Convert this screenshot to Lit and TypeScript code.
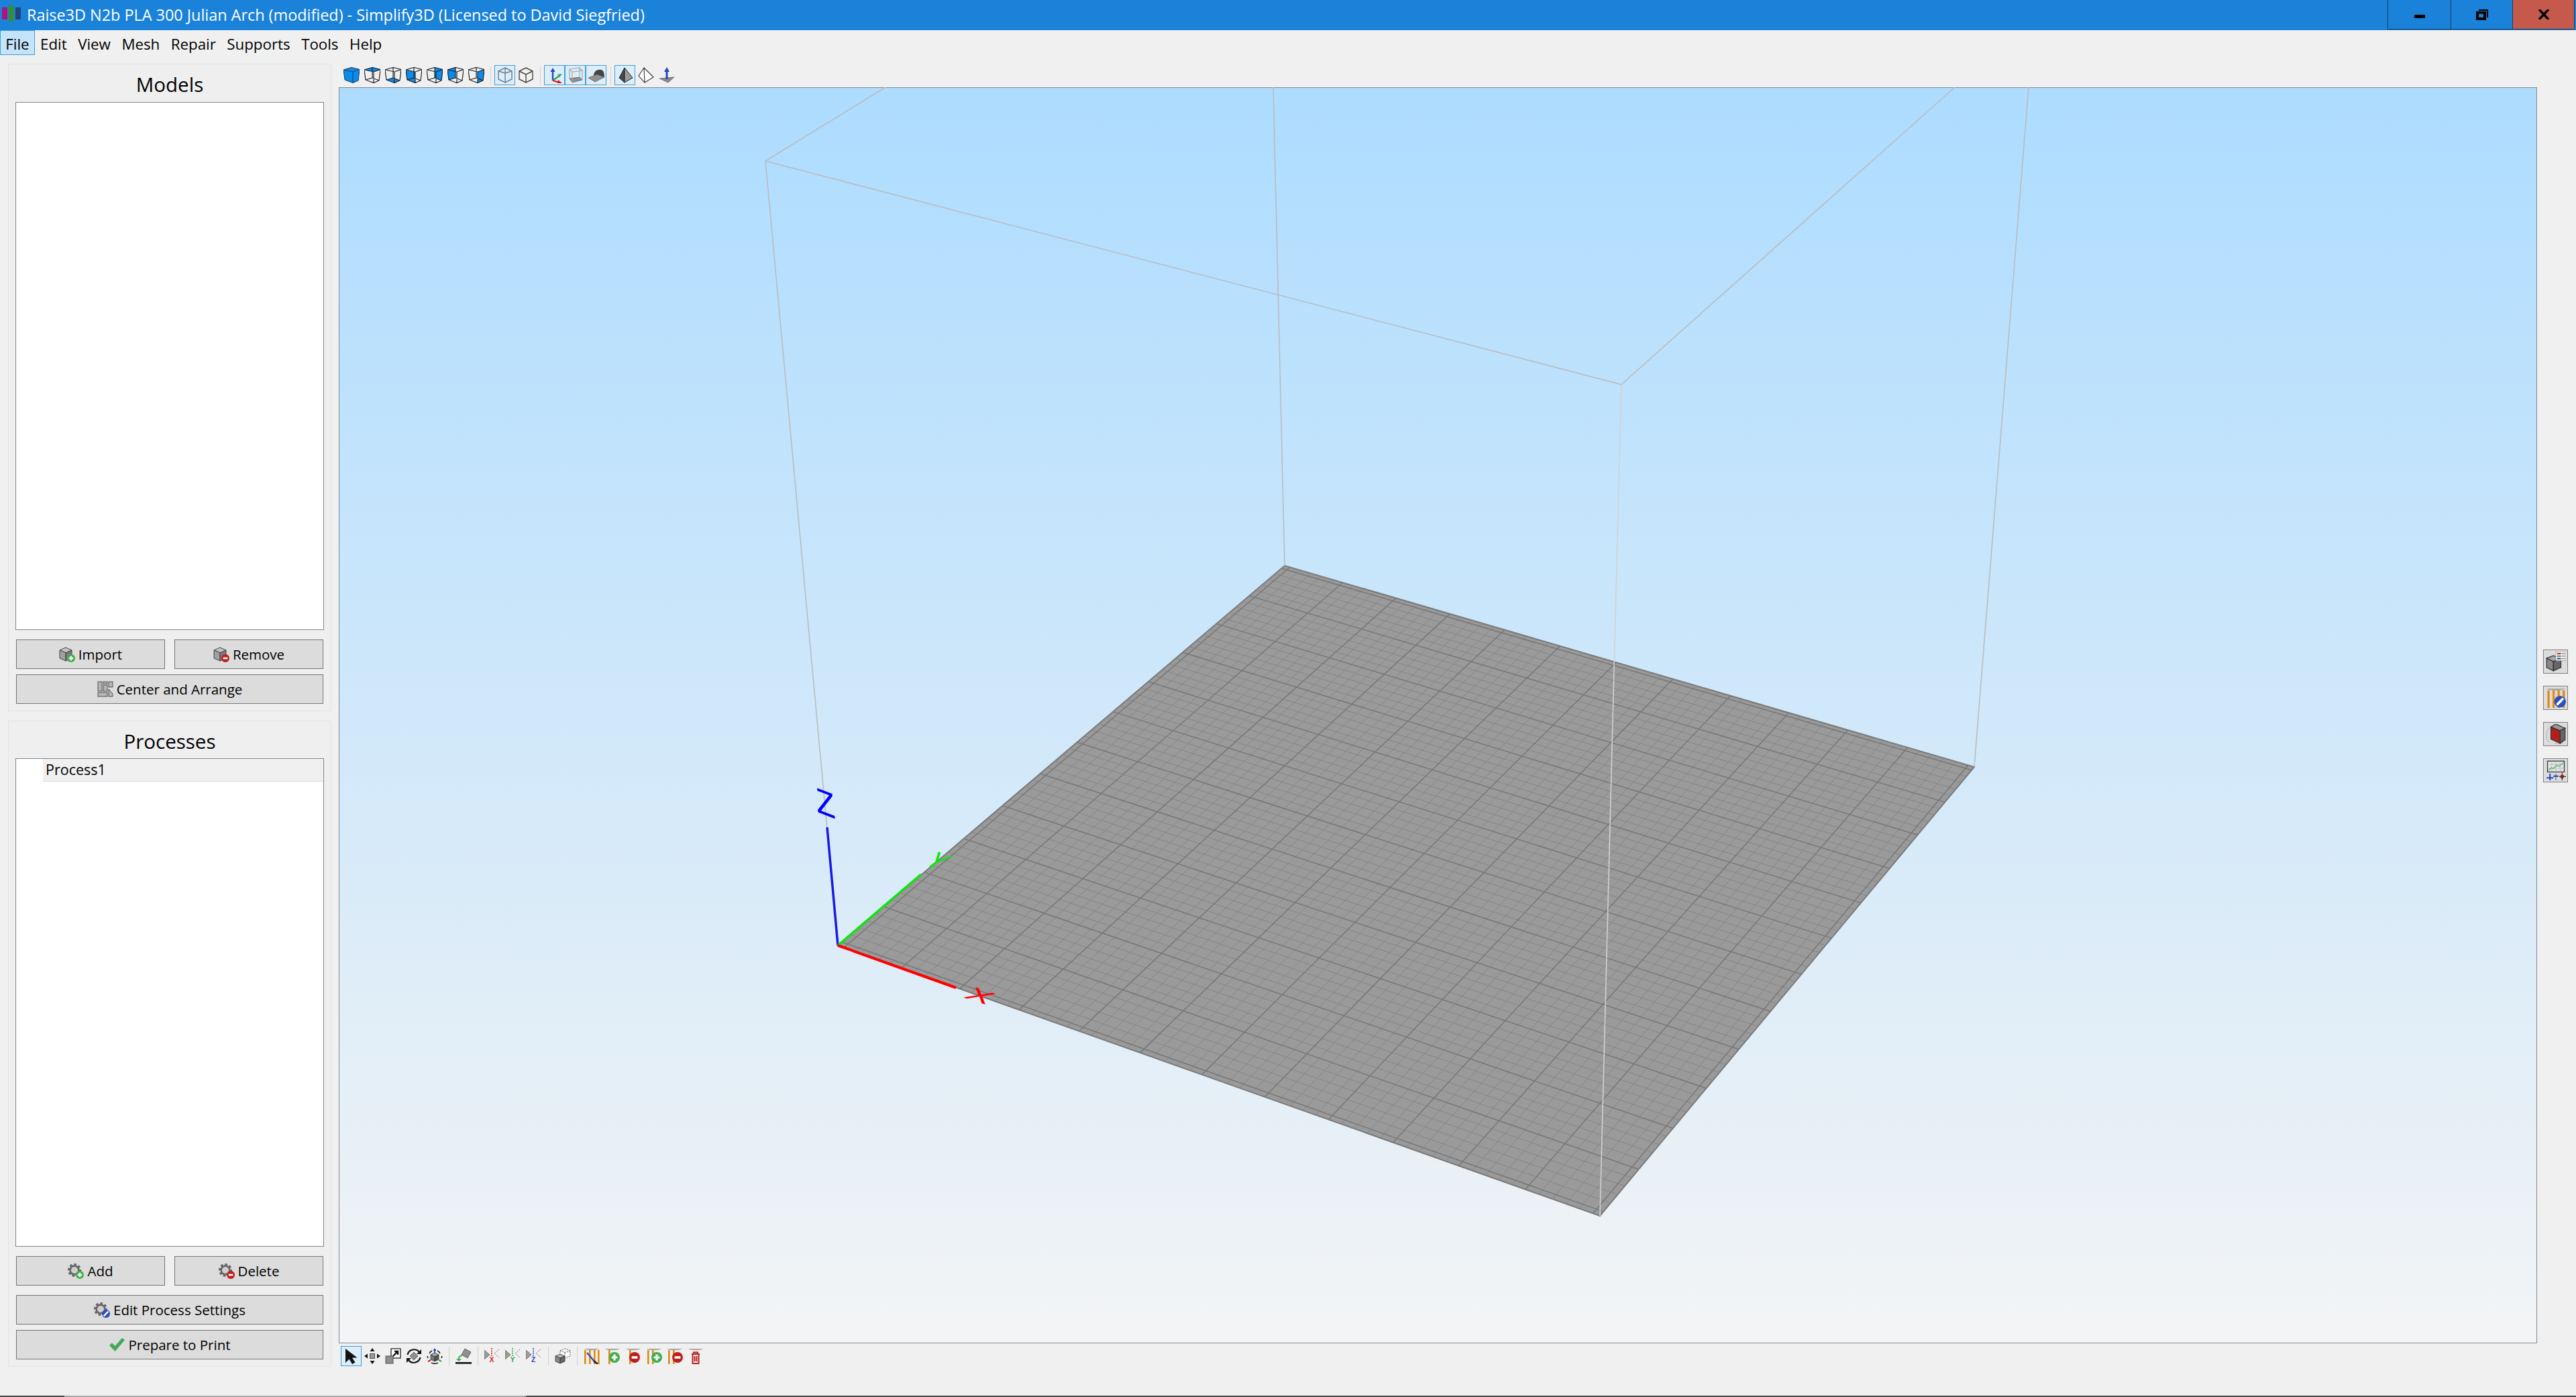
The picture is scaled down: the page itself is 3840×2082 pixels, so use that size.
import { LitElement, html, svg, css } from "lit";
import { customElement } from "lit/decorators.js";

// ---- build plate: 305mm bed projected on to the four corners seen on screen
const P = [[1249.3, 1409.3], [2385, 1812], [2943, 1143], [1915, 843]];

function makeHomography() {
  const [[x0, y0], [x1, y1], [x2, y2], [x3, y3]] = P;
  const dx1 = x1 - x2, dx2 = x3 - x2, sx = x0 - x1 + x2 - x3;
  const dy1 = y1 - y2, dy2 = y3 - y2, sy = y0 - y1 + y2 - y3;
  const den = dx1 * dy2 - dx2 * dy1;
  const g = (sx * dy2 - dx2 * sy) / den;
  const h = (dx1 * sy - sx * dy1) / den;
  const a = x1 - x0 + g * x1, b = x3 - x0 + h * x3;
  const d = y1 - y0 + g * y1, e = y3 - y0 + h * y3;
  return (u: number, v: number) => {
    const w = g * u + h * v + 1;
    return [(a * u + b * v + x0) / w, (d * u + e * v + y0) / w];
  };
}

const project = makeHomography();

function gridPath(step: number, skipMajor: boolean) {
  let d = "";
  for (let mm = 2.5; mm < 305; mm += step) {
    if (skipMajor && Math.abs((mm - 2.5) % 25) < 0.01) continue;
    const t = mm / 305;
    const [ax, ay] = project(t, 0), [bx, by] = project(t, 1);
    const [cx, cy] = project(0, t), [ex, ey] = project(1, t);
    d += `M${ax.toFixed(1)} ${ay.toFixed(1)}L${bx.toFixed(1)} ${by.toFixed(1)}`;
    d += `M${cx.toFixed(1)} ${cy.toFixed(1)}L${ex.toFixed(1)} ${ey.toFixed(1)}`;
  }
  return d;
}

const minorGrid = gridPath(5, true);
const majorGrid = gridPath(25, false);

const scene = svg`
  <polygon points=${P.map((p) => p.join(",")).join(" ")} fill="#9a9a9a" stroke="#7a7a7a" stroke-width="2"/>
  <path d=${minorGrid} stroke="#868686" stroke-width="1" fill="none"/>
  <path d=${majorGrid} stroke="#777" stroke-width="1.5" fill="none"/>
  <g stroke="#b8bdc0" stroke-width="1.6" fill="none">
    <path d="M1320 130L1141 240L2417 573L2914 130"/>
    <path d="M1141 240L1249 1409"/>
    <path d="M1898 130L1915 843"/>
    <path d="M3024 130L2943 1143"/>
    <path d="M2417 573L2385 1812" stroke="#cfd2d3"/>
  </g>
  <path d="M1233 1233L1249 1409" stroke="#1a1ae6" stroke-width="3.5"/>
  <path d="M1249 1409L1373 1303M1386 1293L1392 1288" stroke="#0ee60e" stroke-width="3.5"/>
  <path d="M1249 1409L1425 1472" stroke="#f00" stroke-width="4"/>
  <text class="axis" fill="#00f" transform="matrix(.92 .35 .087 1.07 1218 1210)" font-size="50">Z</text>
  <text class="axis" fill="#0ee60e" transform="matrix(.8625 .3 -.85 .725 1374.5 1289)" font-size="40">Y</text>
  <text class="axis" fill="#f00" transform="matrix(1.31 .43 -.616 .56 1435 1486)" font-size="40">X</text>
`;

// ---- toolbar icons, all on a 24 box
const V = {
  A: "0,4", B: "12,0.5", C: "24,3.5", D: "14,7",
  E: "2,19", F: "12,16", G: "22,20", H: "14,23.5",
};
const faces: Record<string, string> = {
  top: `${V.A} ${V.B} ${V.C} ${V.D}`,
  bottom: `${V.E} ${V.F} ${V.G} ${V.H}`,
  frontL: `${V.A} ${V.D} ${V.H} ${V.E}`,
  frontR: `${V.D} ${V.C} ${V.G} ${V.H}`,
  backL: `${V.A} ${V.B} ${V.F} ${V.E}`,
  backR: `${V.B} ${V.C} ${V.G} ${V.F}`,
};
const wire = "M0 4L12 .5L24 3.5L22 20L14 23.5L2 19ZM0 4L14 7L24 3.5M14 7L14 23.5M12 .5L12 16M2 19L12 16L22 20";

const box = (body: unknown, size = 24) => html`<svg class="ico" width=${size} height=${size} viewBox="0 0 24 24">${body}</svg>`;

const viewCube = (names: string[]) =>
  box(svg`${names.map((n) => svg`<polygon points=${faces[n]} fill="#0b8bee"/>`)}
    <path d=${wire} fill="none" stroke="#222" stroke-width="1.2" stroke-linejoin="round"/>`);

const solidCube = box(svg`
  <polygon points=${faces.top} fill="#0b8bee"/><polygon points=${faces.frontL} fill="#0b8bee"/><polygon points=${faces.frontR} fill="#0b8bee"/>
  <path d="M0 4L12 .5L24 3.5L22 20L14 23.5L2 19Z M0 4L14 7L24 3.5 M14 7V23.5" fill="none" stroke="#1d3a55" stroke-width="1"/>`);

const hexPale = box(svg`<path d="M12 1L22 6V18L12 23L2 18V6ZM12 1V23M2 6L12 9L22 6" fill="none" stroke="#6d7f8c" stroke-width="1.4"/>`);
const hexWire = box(svg`<path d="M12 1L22 6V18L12 23L2 18V6ZM2 6L12 11L22 6M12 11V23" fill="none" stroke="#444" stroke-width="1.4"/>`);
const axesIcon = box(svg`
  <path d="M9 20V5" stroke="#2546c4" stroke-width="2.4"/><path d="M9 1L5.5 7H12.5Z" fill="#2546c4"/>
  <path d="M9 20L20 12" stroke="#2aa84a" stroke-width="2.2"/><path d="M23 10L16 11L19 15Z" fill="#2aa84a"/>
  <path d="M9 20L19 23" stroke="#e01818" stroke-width="2.2"/><path d="M23 24L17 19L16 24Z" fill="#e01818"/>`);
const ghostBox = box(svg`
  <polygon points="3,17 18,15 22,19 7,23" fill="#8f8f8f" stroke="#666" stroke-width=".8"/>
  <path d="M3 3L18 1L22 5L7 7ZM3 3V17M18 1V15M22 5V19M7 7V23" fill="none" stroke="#aaa" stroke-width="1.2"/>`);
const wallIcon = box(svg`
  <polygon points="0,16 12,11 24,15 10,22" fill="#8f8f8f" stroke="#666" stroke-width=".8"/>
  <path d="M8 13C8 6 14 3 19 4C23 5 24 9 24 15L13 11Z" fill="#444"/>`);
const pyramidDark = box(svg`
  <polygon points="11,1 3,16 11,23" fill="#4a4a4a" stroke="#222"/><polygon points="11,1 23,16 11,23" fill="#9a9a9a" stroke="#222"/>`);
const pyramidWire = box(svg`<path d="M9 1L23 15L10 23L1 13ZM9 1L10 23" fill="#fff" stroke="#333" stroke-width="1.1"/>`);
const arrowPlate = box(svg`
  <polygon points="1,17 23,15 14,23" fill="#8a8a8a" stroke="#666" stroke-width=".8"/>
  <path d="M12 18V6" stroke="#2546c4" stroke-width="3"/><path d="M12 0L8 7H16Z" fill="#2546c4"/>`);

const pointer = box(svg`<path d="M3 1V22L8.5 16.5L13 24L17.5 21.5L13 14.5H20.5Z" fill="#111"/>`);
const moveIcon = box(svg`
  <rect x="8.5" y="8.5" width="7" height="7" fill="#999" stroke="#555"/>
  <path d="M12 0L8.5 5H15.5ZM12 24L8.5 19H15.5ZM0 12L5 8.5V15.5ZM24 12L19 8.5V15.5Z" fill="#111"/>`);
const scaleIcon = box(svg`
  <rect x="9" y="1" width="14" height="14" fill="#fff" stroke="#333" stroke-width="1.4"/>
  <rect x="1" y="12" width="11" height="11" fill="#8f8f8f" stroke="#555"/>
  <path d="M12 12L18 6M14 5H19V10" fill="none" stroke="#111" stroke-width="2.4"/>`);
const rotateIcon = box(svg`
  <polygon points="12,6 18,12 12,18 6,12" fill="#8f8f8f" stroke="#666"/>
  <path d="M2.5 10A10 10 0 0 1 20 6M21.5 14A10 10 0 0 1 4 18" fill="none" stroke="#111" stroke-width="2.2"/>
  <path d="M23 2V9H16ZM1 22V15H8Z" fill="#111"/>`);
const gizmoIcon = box(svg`
  <path d="M4 8A10 10 0 0 1 8 4M16 4A10 10 0 0 1 20 8M7 22A11 11 0 0 0 17 22M2 15L1 12M22 15L23 12" fill="none" stroke="#222" stroke-width="1.6"/>
  <polygon points="12,7 18,10 12,13 6,10" fill="#aaa" stroke="#333" stroke-width=".8"/>
  <polygon points="6,10 12,13 12,20 6,17" fill="#777" stroke="#333" stroke-width=".8"/>
  <polygon points="18,10 12,13 12,20 18,17" fill="#555" stroke="#333" stroke-width=".8"/>
  <path d="M12 7V3" stroke="#2546c4" stroke-width="2"/><path d="M12 0L9.5 4H14.5Z" fill="#2546c4"/>
  <path d="M6 18L2 20" stroke="#e01818" stroke-width="2"/><path d="M18 18L22 20" stroke="#2aa84a" stroke-width="2"/>`);
const dropIcon = box(svg`
  <polygon points="14,1 23,6 18,15 9,10" fill="#8f8f8f" stroke="#666"/>
  <path d="M10 11C5 12 4 15 5 18" fill="none" stroke="#3fae4a" stroke-width="1.8"/>
  <path d="M1 16L9 16L5 20Z" fill="#3fae4a"/><rect x="0" y="21" width="24" height="2.6" fill="#111"/>`);
const mirror = (label: string, color: string) => box(svg`
  <polygon points="0,3 8,10 0,17" fill="#9a9a9a" stroke="#666" stroke-width=".8"/>
  <path d="M11 0V12" stroke=${color} stroke-width="1.6" stroke-dasharray="2 1.4"/>
  <path d="M22 2L15 8L22 14" fill="none" stroke="#777" stroke-width="1" stroke-dasharray="2 1.4"/>
  <text class="mir" x="11" y="21" fill=${color} text-anchor="middle">${label}</text>`);
const dupIcon = box(svg`
  <path d="M15 1L23 4V12L15 15L8 12V4ZM8 4L15 7L23 4M15 7V15" fill="#fff" stroke="#555" stroke-width="1" stroke-dasharray="2 1.4"/>
  <polygon points="8,9 15,12 8,15 1,12" fill="#bbb" stroke="#333" stroke-width=".8"/>
  <polygon points="1,12 8,15 8,23 1,20" fill="#8a8a8a" stroke="#333" stroke-width=".8"/>
  <polygon points="15,12 8,15 8,23 15,20" fill="#666" stroke="#333" stroke-width=".8"/>`);

const badge = (cx: number, cy: number, r: number, kind: string) => {
  const fill = kind === "plus" ? "#3fae4a" : kind === "minus" ? "#bd1f1f" : "#2b4fc0";
  const t = r * 0.55;
  const mark =
    kind === "plus"
      ? svg`<path d="M${cx - t} ${cy}H${cx + t}M${cx} ${cy - t}V${cy + t}" stroke="#fff" stroke-width=${r * 0.4}/>`
      : kind === "minus"
        ? svg`<path d="M${cx - t} ${cy}H${cx + t}" stroke="#fff" stroke-width=${r * 0.45}/>`
        : svg`<path d="M${cx - t} ${cy + t}L${cx + t} ${cy - t}" stroke="#fff" stroke-width=${r * 0.42}/>`;
  return svg`<circle cx=${cx} cy=${cy} r=${r} fill=${fill}/>${mark}`;
};

const dome = svg`<path d="M1 1H23C20 4 4 4 1 1Z" fill="#a6a6a6"/>`;
const bars = (xs: number[]) => svg`${xs.map((x) => svg`<rect x=${x} y="3" width="2.6" height="21" fill="#e08a12"/>`)}`;
const supportAuto = box(svg`${dome}${bars([1, 8, 15, 21])}
  <path d="M5 7L17 21" stroke="#2b4fc0" stroke-width="2.4"/><path d="M15 19L21 24" stroke="#222" stroke-width="2.6"/>`);
const supportAdd = box(svg`${dome}${bars([6])}${badge(15, 14, 8, "plus")}`);
const supportDel = box(svg`${dome}${bars([6])}${badge(14, 14, 8, "minus")}`);
const supportAdd2 = box(svg`${dome}${bars([2, 9])}${badge(16, 14, 8, "plus")}`);
const supportDel2 = box(svg`${dome}${bars([2, 9])}${badge(16, 14, 8, "minus")}`);
const supportTrash = box(svg`${dome}
  <path d="M6 9H18M9 9V6.5H15V9M7.5 9V23H16.5V9M10.5 12V20M13.5 12V20" fill="none" stroke="#bd1f1f" stroke-width="2"/>`);

const greyCube = svg`
  <polygon points="10,2 19,6 10,10 1,6" fill="#c2c2c2" stroke="#444" stroke-width="1"/>
  <polygon points="1,6 10,10 10,22 1,18" fill="#a0a0a0" stroke="#444" stroke-width="1"/>
  <polygon points="19,6 10,10 10,22 19,18" fill="#7a7a7a" stroke="#444" stroke-width="1"/>`;
const gear = svg`
  <circle cx="10" cy="11" r="8.6" fill="none" stroke="#666" stroke-width="3" stroke-dasharray="3.6 3"/>
  <circle cx="10" cy="11" r="6.4" fill="#cfcfcf" stroke="#666" stroke-width="2.6"/>`;

const cubePlus = box(svg`${greyCube}${badge(18, 18, 6, "plus")}`);
const cubeMinus = box(svg`${greyCube}${badge(18, 18, 6, "minus")}`);
const gearPlus = box(svg`${gear}${badge(18, 18, 6, "plus")}`);
const gearMinus = box(svg`${gear}${badge(18, 18, 6, "minus")}`);
const gearEdit = box(svg`${gear}${badge(18, 18, 6, "edit")}`);
const arrange = box(svg`
  <g fill="#b5b5b5" stroke="#555" stroke-width="1">
    <rect x="1" y="1" width="6" height="14"/><rect x="9" y="1" width="6" height="3"/><rect x="9" y="6" width="6" height="9"/>
    <rect x="17" y="1" width="6" height="8"/><rect x="1" y="17" width="14" height="6"/>
    <polygon points="17,12 23,19 23,23 17,23"/>
  </g>`);
const check = box(svg`<path d="M1 13L5 9.5L9.5 14L20 2L24 5L9.5 22Z" fill="#43a857"/>`);

const listCube = box(svg`
  <polygon points="9,5 18,8 9,12 1,8" fill="#a8a8a8" stroke="#333"/>
  <polygon points="1,8 9,12 9,23 1,19" fill="#888" stroke="#333"/>
  <polygon points="18,8 9,12 9,23 18,19" fill="#666" stroke="#333"/>
  <rect x="12" y="0" width="12" height="11" fill="#eee" stroke="#999" stroke-width=".6"/>
  <path d="M13.5 2.5H18" stroke="#e01818" stroke-width="1.6"/><path d="M13.5 5.5H18" stroke="#2aa84a" stroke-width="1.6"/><path d="M13.5 8.5H18" stroke="#2546c4" stroke-width="1.6"/>
  <path d="M19 2.5H23M19 5.5H23M19 8.5H23" stroke="#888" stroke-width="1"/>`);
const barsEdit = box(svg`${dome}${bars([2, 8, 14, 20])}${badge(17, 16.5, 7, "edit")}`);
const redCube = box(svg`
  <path d="M4 5L1 9V18L4 21M11 23H20" fill="none" stroke="#888" stroke-width=".8" stroke-dasharray="1.6 1.2"/>
  <polygon points="12,0 23,5 17,8 6,3.5" fill="#999" stroke="#333"/>
  <polygon points="6,4 17,8 17,23 6,18" fill="#b3201c" stroke="#333"/>
  <polygon points="23,5 17,8 17,23 23,19" fill="#666" stroke="#333"/>`);
const chartIcon = box(svg`
  <rect x="2" y="1" width="20" height="13" fill="#e4e4e4" stroke="#333" stroke-width="1"/>
  <path d="M2 5H22M2 9.5H22M7 1V14M12 1V14M17 1V14" stroke="#aaa" stroke-width=".5"/>
  <path d="M3 12L7 9L9 10L13 6L16 7L21 3" fill="none" stroke="#5cb870" stroke-width="1.2"/>
  <path d="M5 16V24M1 21H9" stroke="#2546c4" stroke-width="1.6"/>
  <path d="M12 16V24" stroke="#777"/><path d="M9 19H15" stroke="#2546c4" stroke-width="1.8"/>
  <rect x="17.5" y="17.5" width="4" height="4" fill="#c22"/><path d="M19.5 15V24M16 19.5H24" stroke="#333"/>`);

@customElement("app-root")
export class AppRoot extends LitElement {
  private _tool(icon: unknown, active = false) {
    return html`<div class="tool ${active ? "on" : ""}">${icon}</div>`;
  }

  private _btn(icon: unknown, label: string) {
    return html`<div class="btn">${icon}<span>${label}</span></div>`;
  }

  render() {
    const sep = html`<div class="sep"></div>`;
    return html`
      <div class="title">
        <svg class="appicon" width="29" height="24" viewBox="0 0 29 24">
          <rect x="0" y="3" width="8" height="18" fill="#b0127a"/>
          <rect x="10" y="0" width="8" height="24" fill="#2f8f3a"/>
          <rect x="20" y="3" width="8" height="18" fill="#24427e"/>
        </svg>
        <span class="title-text">Raise3D N2b PLA 300 Julian Arch (modified) - Simplify3D (Licensed to David Siegfried)</span>
        <div class="wbtn min"><i></i></div>
        <div class="wbtn max">
          <svg width="18" height="16" viewBox="0 0 18 16"><path d="M4 0H18V12H16V2H4Z" fill="#000"/><path d="M0 3H15V16H0ZM4 6.5V12H11V6.5Z" fill="#000" fill-rule="evenodd"/></svg>
        </div>
        <div class="wbtn close">
          <svg width="16" height="15" viewBox="0 0 16 15"><path d="M1 0L15 15M15 0L1 15" stroke="#000" stroke-width="3.4"/></svg>
        </div>
      </div>

      <div class="menu">
        ${["File", "Edit", "View", "Mesh", "Repair", "Supports", "Tools", "Help"].map(
          (m, i) => html`<span class="mi ${i === 0 ? "hot" : ""}">${m}</span>`,
        )}
      </div>

      <div class="body">
        <aside class="side">
          <section class="group models">
            <h2>Models</h2>
            <div class="list"></div>
            <div class="pair">${this._btn(cubePlus, "Import")}${this._btn(cubeMinus, "Remove")}</div>
            ${this._btn(arrange, "Center and Arrange")}
          </section>
          <section class="group procs">
            <h2>Processes</h2>
            <div class="list"><div class="row">Process1</div></div>
            <div class="pair">${this._btn(gearPlus, "Add")}${this._btn(gearMinus, "Delete")}</div>
            <div class="stack">
              ${this._btn(gearEdit, "Edit Process Settings")}
              ${this._btn(check, "Prepare to Print")}
            </div>
          </section>
        </aside>

        <main class="main">
          <div class="tb top">
            ${this._tool(solidCube)}
            ${this._tool(viewCube(["top"]))}
            ${this._tool(viewCube(["bottom"]))}
            ${this._tool(viewCube(["frontL"]))}
            ${this._tool(viewCube(["backR"]))}
            ${this._tool(viewCube(["backL"]))}
            ${this._tool(viewCube(["frontR"]))}
            ${sep}
            ${this._tool(hexPale, true)}${this._tool(hexWire)}
            ${sep}
            ${this._tool(axesIcon, true)}${this._tool(ghostBox, true)}${this._tool(wallIcon, true)}
            ${sep}
            ${this._tool(pyramidDark, true)}${this._tool(pyramidWire)}${this._tool(arrowPlate)}
          </div>
          <div class="view">
            <svg class="scene" viewBox="505 130 3277 1872" preserveAspectRatio="none">${scene}</svg>
          </div>
          <div class="tb bottom">
            ${this._tool(pointer, true)}${this._tool(moveIcon)}${this._tool(scaleIcon)}${this._tool(rotateIcon)}${this._tool(gizmoIcon)}
            ${sep}
            ${this._tool(dropIcon)}
            ${sep}
            ${this._tool(mirror("X", "#e01818"))}${this._tool(mirror("Y", "#2aa84a"))}${this._tool(mirror("Z", "#2546c4"))}
            ${sep}
            ${this._tool(dupIcon)}
            ${sep}
            ${this._tool(supportAuto)}${this._tool(supportAdd)}${this._tool(supportDel)}${this._tool(supportAdd2)}${this._tool(supportDel2)}${this._tool(supportTrash)}
          </div>
        </main>

        <div class="rail">
          <div class="rbtn">${listCube}</div>
          <div class="rbtn">${barsEdit}</div>
          <div class="rbtn">${redCube}</div>
          <div class="rbtn">${chartIcon}</div>
        </div>
      </div>

      <div class="taskbar"><i class="a"></i><i class="b"></i><i class="c"></i></div>
    `;
  }

  static styles = css`
    :host {
      display: flex;
      flex-direction: column;
      width: 3840px;
      height: 2082px;
      overflow: hidden;
      background: #f0f0f0;
      color: #000;
      font-family: "Open Sans", "Noto Sans", sans-serif;
      font-size: 20.5px;
    }

    .ico {
      display: block;
      flex: none;
    }

    .title {
      display: flex;
      align-items: flex-start;
      height: 45px;
      flex: none;
      background: #1a82d9;
      color: #fff;
    }

    .appicon {
      margin: 8px 8px 0 3px;
      flex: none;
    }

    .title-text {
      flex: 1;
      line-height: 45px;
      font-size: 23.4px;
    }

    .wbtn {
      box-sizing: border-box;
      height: 44px;
      display: flex;
      align-items: center;
      justify-content: center;
      border: 1px solid #1d3f5e;
      border-top: none;
      border-left-width: 1px;
    }

    .wbtn.min {
      width: 94px;
      border-right: none;
    }

    .wbtn.min i {
      display: block;
      width: 16px;
      height: 5px;
      margin-top: 6px;
      background: #000;
    }

    .wbtn.max {
      width: 92px;
      border-right: none;
    }

    .wbtn.close {
      width: 93px;
      margin-right: 2px;
      background: #c4594c;
    }

    .menu {
      display: flex;
      flex: none;
      height: 37px;
      font-size: 22.3px;
    }

    .mi {
      box-sizing: border-box;
      height: 37px;
      padding: 0 7.25px;
      line-height: 39px;
      border: 1px solid transparent;
    }

    .mi.hot {
      background: #c4e4fb;
      border-color: #3f9fdc;
    }

    .body {
      flex: 1;
      min-height: 0;
      display: flex;
    }

    .side {
      box-sizing: border-box;
      width: 505px;
      flex: none;
      display: flex;
      flex-direction: column;
      gap: 14px;
      padding: 13px 11px 43px 12px;
    }

    .group {
      box-sizing: border-box;
      display: flex;
      flex-direction: column;
      border: 1px solid #dfe3e6;
      padding: 0 10px 10px;
      background: #efefef;
    }

    .models {
      height: 965px;
    }

    .procs {
      flex: 1;
      min-height: 0;
    }

    h2 {
      margin: 0;
      flex: none;
      box-sizing: border-box;
      height: 56px;
      padding-top: 7px;
      line-height: 46px;
      text-align: center;
      font-size: 29.5px;
      font-weight: 400;
    }

    .procs h2 {
      height: 55px;
    }

    .list {
      flex: 1;
      min-height: 0;
      background: #fff;
      border: 1px solid #858585;
      margin-bottom: 14px;
    }

    .row {
      box-sizing: border-box;
      height: 34px;
      margin-left: 40px;
      padding-left: 4px;
      line-height: 32px;
      font-size: 21.5px;
      background: #f0f0f0;
      border-bottom: 1px solid #dcdcdc;
    }

    .pair {
      display: flex;
      justify-content: space-between;
      margin: 0 1px 8px;
    }

    .pair .btn {
      width: 222px;
      margin: 0;
    }

    .procs .pair {
      margin-bottom: 14px;
    }

    .stack {
      display: flex;
      flex-direction: column;
      gap: 8px;
    }

    .btn {
      box-sizing: border-box;
      height: 44px;
      margin: 0 1px;
      display: flex;
      align-items: center;
      justify-content: center;
      gap: 5px;
      background: #dcdcdc;
      border: 1px solid #767676;
    }

    .main {
      flex: 1;
      min-width: 0;
      display: flex;
      flex-direction: column;
    }

    .tb {
      display: flex;
      flex: none;
      align-items: center;
      padding-left: 3px;
    }

    .tb.top {
      height: 48px;
      padding-bottom: 3px;
      box-sizing: border-box;
      align-items: flex-end;
    }

    .tb.bottom {
      padding-top: 4px;
    }

    .tool {
      box-sizing: border-box;
      width: 31px;
      height: 30px;
      display: flex;
      align-items: center;
      justify-content: center;
      flex: none;
      border: 1px solid transparent;
    }

    .tool.on {
      background: #dcedfb;
      border-color: #3fa0dc;
    }

    .sep {
      width: 1px;
      height: 28px;
      margin: 0 5px 0 6px;
      background: #d2d2d2;
      flex: none;
    }

    .view {
      box-sizing: border-box;
      height: 1872px;
      flex: none;
      position: relative;
      border: 1px solid #7f8a95;
      background: linear-gradient(#addcff, #f3f4f5);
    }

    .scene {
      position: absolute;
      left: -1px;
      top: -1px;
      width: 3277px;
      height: 1872px;
    }

    .axis {
      font-family: "Liberation Sans", sans-serif;
    }

    .mir {
      font-family: "Liberation Sans", sans-serif;
      font-size: 10px;
      font-weight: 700;
    }

    .rail {
      width: 58px;
      flex: none;
      box-sizing: border-box;
      display: flex;
      flex-direction: column;
      align-items: flex-start;
      gap: 18px;
      padding: 886px 0 0 9px;
    }

    .rbtn {
      box-sizing: border-box;
      width: 37px;
      height: 36px;
      display: flex;
      align-items: center;
      justify-content: center;
      background: #dcdcdc;
      border: 1px solid #808080;
    }

    .rbtn .ico {
      width: 30px;
      height: 30px;
    }

    .taskbar {
      display: flex;
      height: 2px;
      flex: none;
    }

    .taskbar i {
      display: block;
      height: 2px;
    }

    .taskbar .a {
      width: 96px;
      background: #444;
    }

    .taskbar .b {
      width: 688px;
      background: #aaa;
    }

    .taskbar .c {
      flex: 1;
      background: #444;
    }
  `;
}
